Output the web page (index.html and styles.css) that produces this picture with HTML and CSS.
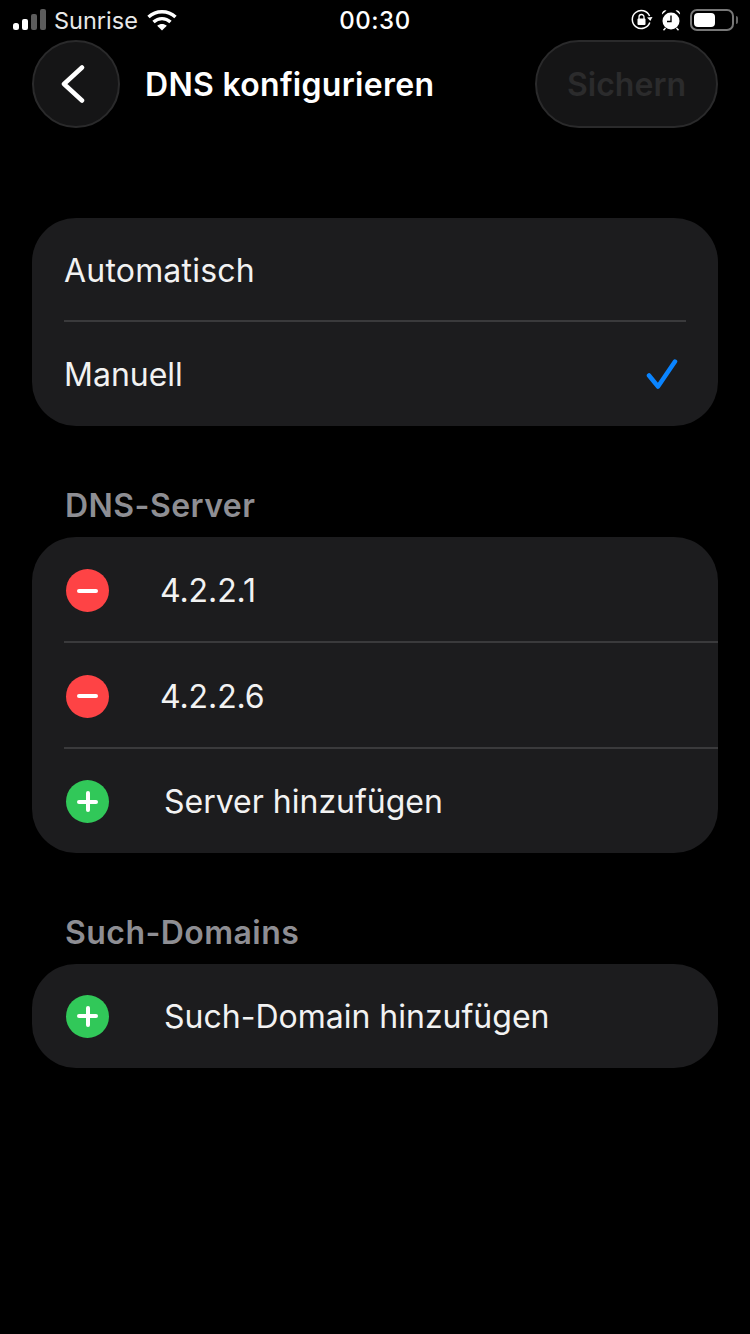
FILE: index.html
```html
<!DOCTYPE html>
<html lang="de">
<head>
  <meta charset="UTF-8">
  <meta name="viewport" content="width=device-width, initial-scale=1.0">
  <title>DNS konfigurieren</title>
  <link rel="stylesheet" href="styles.css">
</head>
<body>
<div class="status-bar">
  <div class="status-left">
    <svg width="36" height="22" viewBox="0 0 36 22">
      <rect x="1" y="14" width="6" height="7" rx="2.5" fill="#fff"/>
      <rect x="10" y="10" width="6" height="11" rx="2" fill="#fff"/>
      <rect x="19" y="5" width="6" height="16" rx="2" fill="#5c5c5c"/>
      <rect x="28" y="0" width="6" height="21" rx="2" fill="#5c5c5c"/>
    </svg>
    <span class="carrier">Sunrise</span>
    <svg class="wifi" width="30" height="22" viewBox="0 0 30 22" fill="none" stroke="#fff" stroke-width="3.4">
      <path d="M1.500 8C9 1 21 1 28.500 8"/>
      <path d="M6.500 13C11.500 8.500 18.500 8.500 23.500 13"/>
      <path d="M15 21.500l-4.800-4.800c2.800-2.200 6.800-2.200 9.600 0z" fill="#fff" stroke="none"/>
    </svg>
  </div>
  <div class="clock">00:30</div>
  <div class="status-right">
    <svg width="22" height="22" viewBox="0 0 22 22" fill="none">
      <path d="M18.800 13.500A9 9 0 1 1 18.600 7" stroke="#fff" stroke-width="1.500"/>
      <path d="M16 8.500l5.500-.5-2.200 4z" fill="#fff"/>
      <rect x="6.500" y="9.500" width="8" height="6.500" rx="1" fill="#fff"/>
      <path d="M8 10V8a2.500 2.500 0 0 1 5 0v2" stroke="#fff" stroke-width="1.300"/>
    </svg>
    <svg width="20" height="22" viewBox="0 0 20 22" fill="none">
      <circle cx="10" cy="12" r="8.500" fill="#fff"/>
      <path d="M10 6.500V12.500H6" stroke="#000" stroke-width="1.400"/>
      <path d="M1 5.500A3.500 3.500 0 0 1 5.500 1.500zM19 5.500A3.500 3.500 0 0 0 14.500 1.500z" fill="#fff"/>
      <path d="M4.500 19l-2 2.200M15.500 19l2 2.200" stroke="#fff" stroke-width="1.400"/>
    </svg>
    <div class="battery"><div class="battery-level"></div></div>
    <div class="battery-tip"></div>
  </div>
</div>

<div class="header">
  <button class="back-btn">
    <svg width="26" height="38" viewBox="0 0 26 38" fill="none" stroke="#fff" stroke-width="4.500" stroke-linecap="round" stroke-linejoin="round">
      <path d="M22 2.500L4 19l18 16.500"/>
    </svg>
  </button>
  <h1 class="title">DNS konfigurieren</h1>
  <button class="save-btn">Sichern</button>
</div>

<div class="card first-card">
  <div class="row inset"><span class="wide">Automatisch</span></div>
  <div class="row">
    <span>Manuell</span>
    <svg class="check" width="34" height="32" viewBox="0 0 34 32" fill="none" stroke="#0a84ff" stroke-width="4.500" stroke-linecap="round" stroke-linejoin="round">
      <path d="M3 17.500L12 28.500L29 3.500"/>
    </svg>
  </div>
</div>

<div class="section-title">DNS-Server</div>
<div class="card">
  <div class="row line">
    <span class="dot red"><span class="bar"></span></span>
    <span class="label">4.2.2.1</span>
  </div>
  <div class="row line">
    <span class="dot red"><span class="bar"></span></span>
    <span class="label">4.2.2.6</span>
  </div>
  <div class="row last">
    <span class="dot green"><span class="bar"></span><span class="bar upright"></span></span>
    <span class="label add">Server hinzufügen</span>
  </div>
</div>

<div class="section-title">Such-Domains</div>
<div class="card">
  <div class="row">
    <span class="dot green"><span class="bar"></span><span class="bar upright"></span></span>
    <span class="label add">Such-Domain hinzufügen</span>
  </div>
</div>
</body>
</html>
```

FILE: styles.css
```css
* {
  box-sizing: border-box;
}
body {
  margin: 0;
  width: 750px;
  height: 1334px;
  overflow: hidden;
  background-color: #000;
  color: #fff;
  font-family: Inter, "Liberation Sans", sans-serif;
}
.status-bar {
  display: grid;
  grid-template-columns: 1fr auto 1fr;
  align-items: center;
  height: 40px;
  padding: 0 12px;
}
.status-left,
.status-right {
  display: flex;
  align-items: center;
}
.status-right {
  justify-content: flex-end;
  gap: 8px;
}
.carrier {
  margin-left: 6px;
  font-size: 23.5px;
  color: #e8e8e8;
}
.wifi {
  margin-left: 9px;
}
.clock {
  font-size: 24px;
  font-weight: 500;
  letter-spacing: 0.5px;
}
.battery {
  width: 44px;
  height: 22px;
  margin-left: 1px;
  padding: 2px;
  border: 2px solid #777;
  border-radius: 7px;
}
.battery-level {
  width: 21px;
  height: 100%;
  background-color: #fff;
  border-radius: 4px;
}
.battery-tip {
  width: 2px;
  height: 8px;
  margin-left: -6px;
  background-color: #666;
  border-radius: 0 2px 2px 0;
}
.header {
  display: flex;
  align-items: center;
  height: 88px;
  padding: 0 32px;
}
.back-btn {
  display: flex;
  align-items: center;
  justify-content: center;
  width: 88px;
  height: 88px;
  padding: 0 6px 0 0;
  background-color: #151516;
  border: 2px solid #2a2a2b;
  border-radius: 50%;
}
.title {
  flex: 1;
  margin: 0 0 0 25px;
  font-size: 32px;
  font-weight: 600;
  letter-spacing: 0.3px;
}
.save-btn {
  width: 183px;
  height: 88px;
  padding: 0;
  font-family: inherit;
  font-size: 32px;
  font-weight: 600;
  color: #2b2b2c;
  background-color: #151516;
  border: 2px solid #2a2a2b;
  border-radius: 44px;
}
.card {
  margin: 0 32px;
  background-color: #1c1c1e;
  border-radius: 44px;
  font-size: 32px;
}
.first-card {
  margin-top: 90px;
}
.row {
  position: relative;
  display: flex;
  align-items: center;
  justify-content: space-between;
  height: 104px;
  padding: 0 40px 0 32px;
  color: #f2f2f2;
}
.row:has(.dot) {
  justify-content: flex-start;
}
.wide {
  letter-spacing: 0.2px;
}
.inset::after,
.line::after {
  content: "";
  position: absolute;
  left: 32px;
  right: 32px;
  bottom: 0;
  height: 2px;
  background-color: #3a3a3c;
}
.line,
.last {
  height: 105px;
  padding-top: 2px;
}
.line + .line {
  height: 106px;
}
.line::after {
  right: 0;
  bottom: -1px;
}
.section-title {
  height: 34px;
  margin: 63px 65px 14px;
  line-height: 34px;
  font-size: 32px;
  font-weight: 600;
  letter-spacing: 0.45px;
  color: #8e8e93;
}
.dot {
  position: relative;
  flex: none;
  width: 43px;
  height: 43px;
  margin-left: 2px;
  border-radius: 50%;
}
.red {
  background-color: #fe4345;
}
.green {
  background-color: #31c859;
}
.bar {
  position: absolute;
  left: 11px;
  top: 19.5px;
  width: 21px;
  height: 4px;
  background-color: #fff;
  border-radius: 2px;
}
.bar.upright {
  left: 19.5px;
  top: 11px;
  width: 4px;
  height: 21px;
}
.label {
  margin-left: 51px;
  letter-spacing: -0.1px;
}
.label.add {
  margin-left: 55px;
  letter-spacing: 0;
}
.check {
  margin-right: -2px;
}
```
